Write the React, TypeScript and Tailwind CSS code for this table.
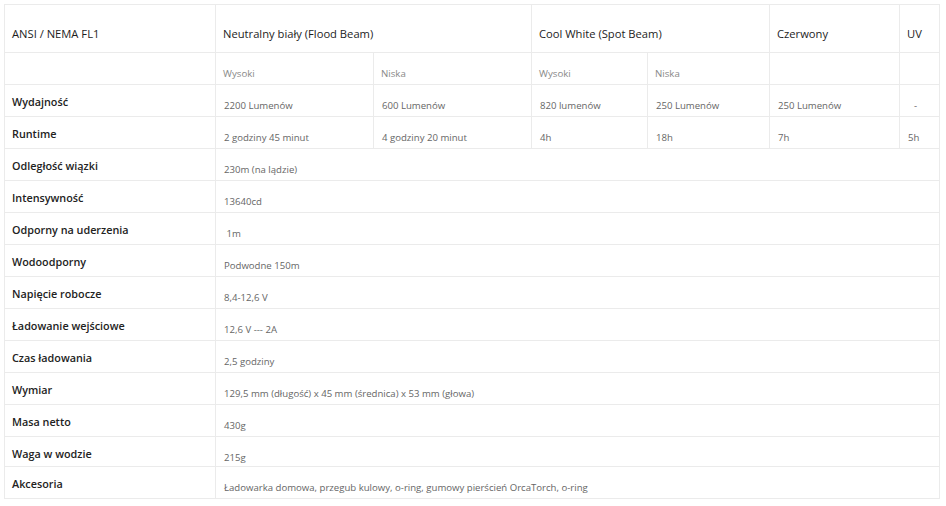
import React from 'react';

const cell = "border-r border-b border-[#ebebeb]";
const head = `${cell} pl-[7px] pt-[21px] text-[11.2px] leading-[16px] text-[#1d1d1d]`;
const sub = `${cell} pl-[7px] pt-[14px] text-[9.7px] leading-[14px] text-[#888]`;

const rows: [string, string][] = [
  ["Odległość wiązki", "230m (na lądzie)"],
  ["Intensywność", "13640cd"],
  ["Odporny na uderzenia", "\u00a01m"],
  ["Wodoodporny", "Podwodne 150m"],
  ["Napięcie robocze", "8,4-12,6 V"],
  ["Ładowanie wejściowe", "12,6 V --- 2A"],
  ["Czas ładowania", "2,5 godziny"],
  ["Wymiar", "129,5 mm (długość) x 45 mm (średnica) x 53 mm (głowa)"],
  ["Masa netto", "430g"],
  ["Waga w wodzie", "215g"],
  ["Akcesoria", "Ładowarka domowa, przegub kulowy, o-ring, gumowy pierścień OrcaTorch, o-ring"],
];

function Label({ children, h = "h-[22px]" }: { children: React.ReactNode; h?: string }) {
  return (
    <div className={`${cell} pl-[7px] pt-[9px] text-[10.8px] leading-[16px] font-semibold text-[#222]`}>
      <div className={h}>{children}</div>
    </div>
  );
}

function Val({ children, span, extra = "" }: { children?: React.ReactNode; span?: boolean; extra?: string }) {
  return (
    <div className={`${cell} ${span ? "col-span-6" : ""} pl-[8px] pt-[14px] text-[9.6px] leading-[14px] text-[#666] ${extra}`}>
      {children}
    </div>
  );
}

export default function App() {
  return (
    <div className="min-h-screen bg-white pt-[4px] pl-[4px]" style={{ fontFamily: '"Open Sans", "Liberation Sans", sans-serif' }}>
      <div className="grid w-[936px] grid-cols-[211px_158px_158px_116px_122px_130px_40px] border-l border-t border-[#ebebeb]">
        {/* header */}
        <div className={`${head} h-[48px]`}>ANSI / NEMA FL1</div>
        <div className={`${head} col-span-2`}>Neutralny biały (Flood Beam)</div>
        <div className={`${head} col-span-2`}>Cool White (Spot Beam)</div>
        <div className={head}>Czerwony</div>
        <div className={head}>UV</div>

        {/* sub header */}
        <div className={`${cell} h-[32px]`} />
        <div className={sub}>Wysoki</div>
        <div className={sub}>Niska</div>
        <div className={sub}>Wysoki</div>
        <div className={sub}>Niska</div>
        <div className={cell} />
        <div className={cell} />

        <Label>Wydajność</Label>
        <Val>2200 Lumenów</Val>
        <Val>600 Lumenów</Val>
        <Val>820 lumenów</Val>
        <Val>250 Lumenów</Val>
        <Val>250 Lumenów</Val>
        <Val extra="pl-[14px]">-</Val>

        <Label>Runtime</Label>
        <Val>2 godziny 45 minut</Val>
        <Val>4 godziny 20 minut</Val>
        <Val>4h</Val>
        <Val>18h</Val>
        <Val>7h</Val>
        <Val>5h</Val>

        {rows.map(([l, v]) => (
          <React.Fragment key={l}>
            <Label h={l === "Waga w wodzie" ? "h-[20px]" : "h-[22px]"}>{l}</Label>
            <Val span>{v}</Val>
          </React.Fragment>
        ))}
      </div>
    </div>
  );
}
